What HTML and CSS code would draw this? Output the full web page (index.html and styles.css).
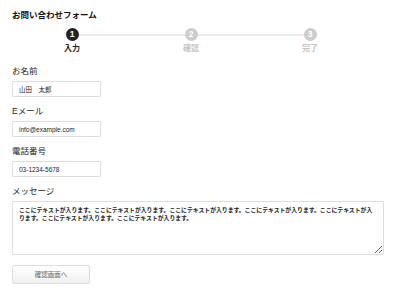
FILE: index.html
```html
<!DOCTYPE html>
<html lang="ja">

<head>
    <meta charset="UTF-8">
    <meta name="viewport" content="width=device-width, initial-scale=1.0">
    <title>お問い合わせフォーム</title>
    <link rel="stylesheet" href="styles.css">
</head>

<body>

    <div class="contact">
        <h1 class="contact_title">お問い合わせフォーム</h1>

        <ol class="steps">
            <li class="step active">
                <span class="step_num">1</span>
                <span class="step_label">入力</span>
            </li>
            <li class="step">
                <span class="step_num">2</span>
                <span class="step_label">確認</span>
            </li>
            <li class="step">
                <span class="step_num">3</span>
                <span class="step_label">完了</span>
            </li>
        </ol>

        <form class="contact_form">
            <div class="field">
                <label for="name">お名前</label>
                <input type="text" id="name" name="name" value="山田　太郎">
            </div>

            <div class="field">
                <label for="email">Eメール</label>
                <input type="email" id="email" name="email" value="info@example.com">
            </div>

            <div class="field">
                <label for="tel">電話番号</label>
                <input type="tel" id="tel" name="tel" value="03-1234-5678">
            </div>

            <div class="field">
                <label for="message">メッセージ</label>
                <textarea id="message" name="message">ここにテキストが入ります。ここにテキストが入ります。ここにテキストが入ります。ここにテキストが入ります。ここにテキストが入ります。ここにテキストが入ります。ここにテキストが入ります。</textarea>
            </div>

            <button type="submit">確認画面へ</button>
        </form>
    </div>

</body>

</html>
```

FILE: styles.css
```css
body {
    font-family: "Liberation Sans", "Noto Sans CJK JP", sans-serif;
    margin: 0;
    padding: 0;
    background-color: #ffffff;
    color: #333333;
}

.contact {
    padding: 9px 12px 0 12px;
}

.contact_title {
    margin: 0;
    font-size: 8.5px;
    line-height: 12px;
    font-weight: bold;
    color: #111111;
}

/* progress steps */
.steps {
    display: flex;
    list-style: none;
    margin: 7px 0 0 0;
    padding: 0;
    width: 357px;
    margin-left: 0.5px;
}

.step {
    flex: 1;
    display: flex;
    flex-direction: column;
    align-items: center;
    position: relative;
}

/* line to the next step, drawn behind the circles */
.step::after {
    content: "";
    position: absolute;
    top: 6px;
    left: 50%;
    width: 100%;
    height: 2px;
    background-color: #ececec;
    z-index: 0;
}

.step:last-child::after {
    display: none;
}

.step_num {
    width: 13px;
    height: 13px;
    border-radius: 50%;
    background-color: #cccccc;
    color: #ffffff;
    font-size: 8.5px;
    font-weight: bold;
    line-height: 13px;
    text-align: center;
    position: relative;
    z-index: 1;
}

.step_label {
    margin-top: 3px;
    font-size: 8px;
    line-height: 10px;
    font-weight: bold;
    color: #c4c4c4;
}

.step.active .step_num {
    background-color: #222222;
}

.step.active .step_label {
    color: #222222;
}

/* form */
.contact_form {
    margin-top: 11px;
}

.field {
    display: flex;
    flex-direction: column;
    align-items: flex-start;
    margin-bottom: 8px;
}

.field label {
    font-size: 8.5px;
    line-height: 12px;
    margin-bottom: 4px;
    color: #222222;
}

.field input {
    box-sizing: border-box;
    width: 89px;
    height: 16px;
    margin: 0;
    padding: 0 6px;
    border: 1px solid #dddddd;
    border-radius: 1px;
    font-family: "Liberation Sans", "Noto Sans CJK JP", sans-serif;
    font-size: 6.5px;
    color: #222222;
    outline: none;
}

.field textarea {
    box-sizing: border-box;
    width: 100%;
    height: 54px;
    margin: 0;
    padding: 4px 6px;
    border: 1px solid #dddddd;
    border-radius: 1px;
    font-family: "Noto Sans CJK JP", sans-serif;
    font-size: 5.85px;
    line-height: 7.5px;
    font-weight: bold;
    color: #222222;
    outline: none;
}

.contact_form button {
    width: 78px;
    height: 19px;
    margin-top: 0;
    padding: 0;
    border: 1px solid #dddddd;
    border-radius: 2px;
    background: linear-gradient(#ffffff, #f0f0f0);
    font-family: "Noto Sans CJK JP", sans-serif;
    font-size: 6.5px;
    color: #666666;
}
```
